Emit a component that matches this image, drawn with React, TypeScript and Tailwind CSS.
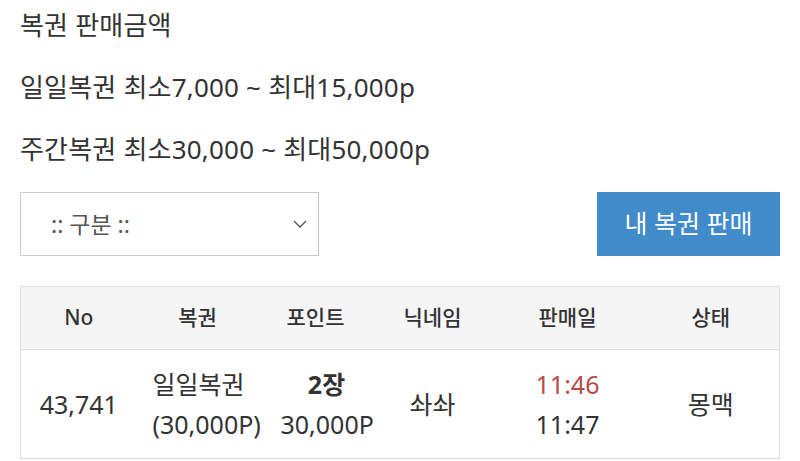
import React from 'react';

const font = { fontFamily: '"Noto Sans", "Noto Sans CJK KR", sans-serif' };

export default function App() {
  return (
    <div className="w-[800px] h-[461px] bg-white text-[#333] overflow-hidden" style={font}>
      <div className="px-5 pt-[9px]">
        {/* 판매금액 안내 */}
        <div className="flex flex-col gap-[30px] text-[26px] leading-[32px] tracking-[0.2px]">
          <p>복권 판매금액</p>
          <p>일일복권 최소7,000 ~ 최대15,000p</p>
          <p>주간복권 최소30,000 ~ 최대50,000p</p>
        </div>

        {/* 구분 + 판매 버튼 */}
        <div className="flex items-center justify-between mt-[27px]">
          <div className="w-[299px] h-[64px] border border-[#ccc] flex items-center justify-between pl-[30px] pr-[10px] text-[23px] text-[#555]">
            <span>:: 구분 ::</span>
            <svg width="16" height="10" viewBox="0 0 16 10" fill="none" stroke="#555" strokeWidth="1.3">
              <path d="M2 2l6 6 6-6" />
            </svg>
          </div>
          <button className="w-[183px] h-[64px] bg-[#428bca] text-white text-[25px]">
            내 복권 판매
          </button>
        </div>

        {/* 판매 목록 */}
        <table className="w-[760px] mt-[30px] border border-[#ddd] border-collapse text-center table-fixed">
          <thead>
            <tr className="bg-[#f5f5f5] h-[63px] text-[21px] text-[#333]">
              <th className="w-[116px] font-medium">No</th>
              <th className="w-[122px] font-medium">복권</th>
              <th className="w-[114px] font-medium">포인트</th>
              <th className="w-[120px] font-medium">닉네임</th>
              <th className="w-[150px] font-medium">판매일</th>
              <th className="font-medium">상태</th>
            </tr>
          </thead>
          <tbody>
            <tr className="h-[109px] border-t border-[#ddd] text-[25px] leading-[40px]">
              <td>43,741</td>
              <td className="text-left pl-[16px] whitespace-nowrap">
                <div>일일복권</div>
                <div>(30,000P)</div>
              </td>
              <td className="pl-[22px] whitespace-nowrap">
                <div className="font-bold">2장</div>
                <div>30,000P</div>
              </td>
              <td>솨솨</td>
              <td>
                <div className="text-[#b94a48]">11:46</div>
                <div>11:47</div>
              </td>
              <td>몽맥</td>
            </tr>
          </tbody>
        </table>
      </div>
    </div>
  );
}
